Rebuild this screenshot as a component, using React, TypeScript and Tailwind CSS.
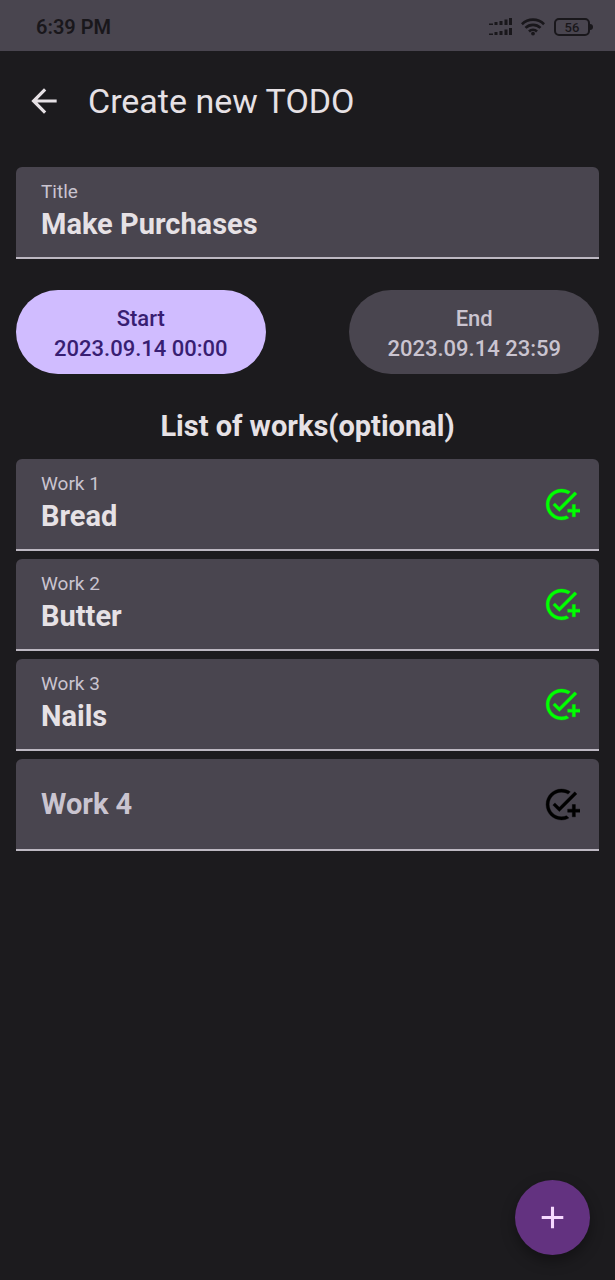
import { useState } from "react";

type Work = { id: number; text: string };

const initialWorks: Work[] = [
  { id: 1, text: "Bread" },
  { id: 2, text: "Butter" },
  { id: 3, text: "Nails" },
  { id: 4, text: "" },
];

function SignalIcon() {
  return (
    <svg width="23" height="20" viewBox="0 0 23 20" fill="currentColor" aria-hidden="true">
      <path d="M0 6.5h4V8H0zM5.5 5h3v3h-3zM10.5 4h3v4h-3zM15.5 2.5h3V8h-3zM20 1h3v7h-3z" />
      <path d="M0 16.5h4V18H0zM5.5 15h3v3h-3zM10.5 14h3v4h-3zM15.5 12.5h3V18h-3zM20 11h3v7h-3z" />
    </svg>
  );
}

function WifiIcon() {
  return (
    <svg width="24" height="18" viewBox="0 0 24 18" fill="none" stroke="currentColor" strokeWidth="2.7" aria-hidden="true">
      <path d="M0.9 6.2a15.8 15.8 0 0 1 22.2 0" />
      <path d="M4.5 9.9a10.7 10.7 0 0 1 15 0" />
      <path d="M8 13.4a5.8 5.8 0 0 1 8 0" />
      <circle cx="12" cy="15.6" r="1.9" fill="currentColor" stroke="none" />
    </svg>
  );
}

function BatteryIcon() {
  return (
    <div className="flex items-center">
      <span className="flex h-[18px] w-9 items-center justify-center rounded-[5px] border-2 border-current text-[13px] leading-none font-medium">
        56
      </span>
      <span className="h-[6px] w-[3px] rounded-r-sm bg-current" />
    </div>
  );
}

function AddTaskIcon() {
  return (
    <svg viewBox="0 0 24 24" className="size-[37px]" fill="currentColor" stroke="currentColor" strokeWidth="0.25" aria-hidden="true">
      <path d="M22 5.18 10.59 16.6l-4.24-4.24 1.41-1.41 2.83 2.83 10-10L22 5.18zM12 20c-4.41 0-8-3.59-8-8s3.59-8 8-8c1.57 0 3.04.46 4.28 1.25l1.45-1.45C16.1 2.67 14.13 2 12 2 6.48 2 2 6.48 2 12s4.48 10 10 10c1.73 0 3.36-.44 4.78-1.22l-1.5-1.5c-1 .46-2.11.72-3.28.72zm7-5h-3v2h3v3h2v-3h3v-2h-3v-3h-2v3z" />
    </svg>
  );
}

type FieldProps = {
  id: string;
  label: string;
  value: string;
  onChange: (value: string) => void;
  action?: boolean;
};

function Field({ id, label, value, onChange, action = false }: FieldProps) {
  const filled = value !== "";
  return (
    <div className="flex h-23 items-center rounded-t-md border-b-2 border-[#bdb8c2] bg-[#49454f] pt-px pr-[19px] pl-[25px]">
      <div className="flex min-w-0 flex-1 flex-col">
        {filled && (
          <label htmlFor={id} className="text-[19px] leading-6 text-[#cac4d0]">
            {label}
          </label>
        )}
        <input
          id={id}
          value={value}
          placeholder={label}
          aria-label={filled ? undefined : label}
          onChange={(e) => onChange(e.target.value)}
          className="h-[42px] w-full bg-transparent text-[29px] font-bold text-[#e6e1e5] outline-none placeholder:text-[#cac4d0]"
        />
      </div>
      {action && (
        <button type="button" aria-label={`Add ${label}`} className={filled ? "text-[#00ff00]" : "text-black"}>
          <AddTaskIcon />
        </button>
      )}
    </div>
  );
}

export default function App() {
  const [title, setTitle] = useState("Make Purchases");
  const [works, setWorks] = useState(initialWorks);

  const updateWork = (id: number, text: string) =>
    setWorks(works.map((work) => (work.id === id ? { ...work, text } : work)));

  return (
    <div className="flex min-h-screen flex-col bg-[#1c1b1e] font-[Roboto,sans-serif] text-[#e6e1e5]">
      <div className="flex h-[51px] items-center justify-between bg-[#49454f] pt-[3px] pr-[22px] pl-9 text-[#19171b]">
        <span className="text-[20px] font-semibold">6:39 PM</span>
        <div className="flex items-center gap-[9px]">
          <SignalIcon />
          <WifiIcon />
          <BatteryIcon />
        </div>
      </div>

      <header className="flex h-[100px] items-center gap-[25px] pl-[25px]">
        <button type="button" aria-label="Back">
          <svg viewBox="0 0 24 24" className="size-[38px]" fill="currentColor" aria-hidden="true">
            <path d="M20 11H7.83l5.59-5.59L12 4l-8 8 8 8 1.41-1.41L7.83 13H20v-2z" />
          </svg>
        </button>
        <h1 className="text-[34px]">Create new TODO</h1>
      </header>

      <main className="flex flex-col px-4 pt-4">
        <Field id="title" label="Title" value={title} onChange={setTitle} />

        <div className="mt-[31px] flex justify-between text-[22px] leading-[30px] font-medium">
          <button type="button" className="h-[84px] rounded-full bg-[#d0bcff] px-[38px] pt-[3px] text-[#381e72]">
            Start
            <br />
            2023.09.14 00:00
          </button>
          <button type="button" className="h-[84px] rounded-full bg-[#49454f] px-[38px] pt-[3px] text-[#cac4d0]">
            End
            <br />
            2023.09.14 23:59
          </button>
        </div>

        <h2 className="mt-8 text-center text-[29px] leading-10 font-bold">List of works(optional)</h2>

        <div className="mt-[13px] flex flex-col gap-2">
          {works.map((work) => (
            <Field
              key={work.id}
              id={`work-${work.id}`}
              label={`Work ${work.id}`}
              value={work.text}
              onChange={(text) => updateWork(work.id, text)}
              action
            />
          ))}
        </div>
      </main>

      <button
        type="button"
        aria-label="Add"
        className="fixed right-[25px] bottom-[25px] flex size-[75px] items-center justify-center rounded-full bg-[#633280] text-[#f6d9ff] shadow-[0_6px_14px_rgba(0,0,0,0.35)]"
      >
        <svg viewBox="0 0 24 24" className="size-[37px]" fill="currentColor" aria-hidden="true">
          <path d="M19 13h-6v6h-2v-6H5v-2h6V5h2v6h6v2z" />
        </svg>
      </button>
    </div>
  );
}
